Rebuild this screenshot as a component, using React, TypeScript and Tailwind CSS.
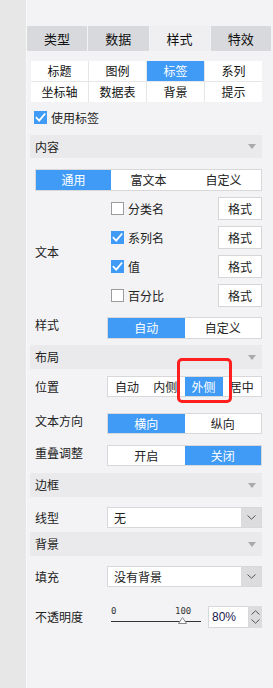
import React from "react";

const font = { fontFamily: '"Noto Sans CJK SC", "Liberation Sans", sans-serif' };

const topTabs = [
  { label: "类型", active: false },
  { label: "数据", active: false },
  { label: "样式", active: true },
  { label: "特效", active: false },
];

const subTabs = ["标题", "图例", "标签", "系列", "坐标轴", "数据表", "背景", "提示"];

const textRows = [
  { label: "分类名", checked: false },
  { label: "系列名", checked: true },
  { label: "值", checked: true },
  { label: "百分比", checked: false },
];

function CheckBox({ checked }: { checked: boolean }) {
  if (!checked) {
    return <span className="block h-[13px] w-[13px] shrink-0 border border-[#9c9c9c] bg-white" />;
  }
  return (
    <span className="flex h-[13px] w-[13px] shrink-0 items-center justify-center bg-[#3f9bf6]">
      <svg viewBox="0 0 13 13" className="h-[13px] w-[13px]" fill="none">
        <path d="M2.5 6.8 5.2 9.6 10.6 3.2" stroke="white" strokeWidth="1.8" strokeLinecap="square" />
      </svg>
    </span>
  );
}

function SectionHeader({ label, h, mt }: { label: string; h: number; mt: number }) {
  return (
    <div
      className="flex items-center justify-between bg-[#eaeaec] pl-[5px] pr-[6px] leading-[16px]"
      style={{ height: h, marginTop: mt }}
    >
      <span className="text-[12px] text-[#222]">{label}</span>
      <svg viewBox="0 0 8 5" className="h-[5px] w-[8px]">
        <path d="M0 0h8L4 5Z" fill="#a9a9ab" />
      </svg>
    </div>
  );
}

function Segmented({ items, active, h = 22 }: { items: string[]; active: number; h?: number }) {
  return (
    <div className="flex border border-[#d8d8da] bg-white leading-[16px]" style={{ height: h }}>
      {items.map((item, i) => (
        <div
          key={item}
          className={`flex flex-1 items-center justify-center text-[12px] ${
            i === active ? "bg-[#3f9bf6] text-white" : "text-[#222]"
          }`}
        >
          {item}
        </div>
      ))}
    </div>
  );
}

function Chevron({ up }: { up?: boolean }) {
  return (
    <svg viewBox="0 0 9 5" className="h-[5px] w-[9px]" fill="none">
      <path d={up ? "M0.5 4.5 4.5 0.8 8.5 4.5" : "M0.5 0.5 4.5 4.2 8.5 0.5"} stroke="#555" strokeWidth="1" />
    </svg>
  );
}

function Select({ value }: { value: string }) {
  return (
    <div className="flex h-[21px] w-[155px] border border-[#d8d8da] bg-white leading-[16px]">
      <span className="flex flex-1 items-center pl-[6px] text-[12px] text-[#222]">{value}</span>
      <span className="flex w-[20px] items-center justify-center bg-[#dcdcde]">
        <Chevron />
      </span>
    </div>
  );
}

function Row({ label, children, center, mt }: { label: string; children: React.ReactNode; center?: boolean; mt: number }) {
  return (
    <div className={`flex ${center ? "items-center" : "items-start"}`} style={{ marginTop: mt }}>
      <span className="w-[77px] pl-[5px] text-[12px] leading-[16px] text-[#222]">{label}</span>
      <div className="w-[155px]">{children}</div>
    </div>
  );
}

export default function App() {
  return (
    <div className="flex min-h-[688px] w-[273px] leading-[16px]" style={font}>
      <div className="w-[27px] shrink-0 border-r border-[#f8f8f8] bg-[#e7e7e7]" />
      <div className="flex-1 bg-[#f3f3f5] pt-[26px]">
        <div className="flex h-[25px] gap-px pr-[2px]">
          {topTabs.map((tab) => (
            <div
              key={tab.label}
              className={`flex flex-1 items-center justify-center text-[13px] text-[#111] ${
                tab.active ? "bg-[#efeff1]" : "bg-[#d8d9dc]"
              }`}
            >
              {tab.label}
            </div>
          ))}
        </div>

        <div className="ml-[3px] w-[232px]">
          <div className="ml-px mt-[10px] grid grid-cols-4 gap-px bg-[#e6e6e8]">
            {subTabs.map((tab) => (
              <div
                key={tab}
                className={`flex h-[20px] items-center justify-center text-[12px] ${
                  tab === "标签" ? "bg-[#3f9bf6] text-white" : "bg-white text-[#111]"
                }`}
              >
                {tab}
              </div>
            ))}
          </div>

          <label className="mt-[9px] flex h-[13px] items-center gap-[4px] pl-[4px]">
            <CheckBox checked />
            <span className="text-[12px] text-[#222]">使用标签</span>
          </label>

          <SectionHeader label="内容" h={23} mt={11} />
          <div className="ml-[5px] mt-[11px]">
            <Segmented items={["通用", "富文本", "自定义"]} active={0} />
          </div>

          <div className="mt-[6px] flex items-center">
            <span className="w-[77px] pl-[5px] text-[12px] text-[#222]">文本</span>
            <div className="flex w-[155px] flex-col gap-[6px]">
              {textRows.map((row) => (
                <div key={row.label} className="flex h-[23px] items-center">
                  <span className="ml-[4px] flex">
                    <CheckBox checked={row.checked} />
                  </span>
                  <span className="ml-[4px] flex-1 text-[12px] text-[#222]">{row.label}</span>
                  <span className="flex h-[23px] w-[44px] items-center justify-center border border-[#d6d6d8] bg-white text-[12px] text-[#222]">
                    格式
                  </span>
                </div>
              ))}
            </div>
          </div>

          <Row label="样式" mt={10}>
            <Segmented items={["自动", "自定义"]} active={0} />
          </Row>

          <SectionHeader label="布局" h={24} mt={6} />

          <Row label="位置" center mt={7}>
            <div className="relative">
              <Segmented items={["自动", "内侧", "外侧", "居中"]} active={2} h={21} />
              <div className="absolute left-[70px] top-[-18px] h-[45px] w-[55px] rounded-[5px] border-[3px] border-[#ff1f1f]" />
            </div>
          </Row>

          <Row label="文本方向" mt={16}>
            <Segmented items={["横向", "纵向"]} active={0} h={21} />
          </Row>

          <Row label="重叠调整" mt={11}>
            <Segmented items={["开启", "关闭"]} active={1} h={21} />
          </Row>

          <SectionHeader label="边框" h={24} mt={7} />

          <Row label="线型" center mt={10}>
            <Select value="无" />
          </Row>

          <SectionHeader label="背景" h={24} mt={4} />

          <Row label="填充" center mt={10}>
            <Select value="没有背景" />
          </Row>

          <Row label="不透明度" center mt={19}>
            <div className="flex items-center">
              <div className="relative ml-[4px] h-[22px] w-[90px]">
                <span className="absolute left-0 top-0 text-[9px] leading-[10px] text-[#333]" style={{ fontFamily: '"DejaVu Sans Mono", monospace' }}>
                  0
                </span>
                <span className="absolute left-[64px] top-0 text-[9px] leading-[10px] text-[#333]" style={{ fontFamily: '"DejaVu Sans Mono", monospace' }}>
                  100
                </span>
                <div className="absolute left-0 right-0 top-[15px] h-px bg-[#333]" />
                <svg viewBox="0 0 9 7" className="absolute left-[67px] top-[11px] h-[7px] w-[9px]">
                  <path d="M4.5 0.5 8.5 6.5H0.5Z" fill="white" stroke="#888" strokeWidth="1" />
                </svg>
              </div>
              <div className="ml-[7px] flex h-[22px] w-[54px]">
                <span className="flex w-[41px] items-center border border-[#d8d8da] bg-white pl-[3px] text-[12px] text-[#1a1a50]" style={{ fontFamily: '"Liberation Sans", sans-serif' }}>
                  80%
                </span>
                <span className="flex w-[13px] flex-col items-center justify-center gap-[4px] bg-[#dcdcde]">
                  <Chevron up />
                  <Chevron />
                </span>
              </div>
            </div>
          </Row>
        </div>
      </div>
    </div>
  );
}
